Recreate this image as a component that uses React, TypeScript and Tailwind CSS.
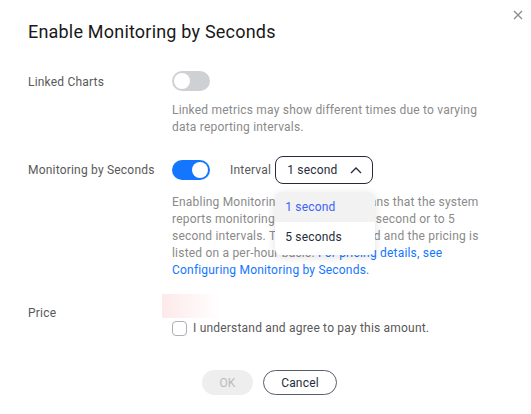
import { useState } from 'react';

function Toggle({ on }: { on: boolean }) {
  return (
    <div
      className={
        'w-[38px] h-[20px] rounded-full p-[2px] flex ' +
        (on ? 'bg-[#1476ff] justify-end' : 'bg-[#cfd0d3] justify-start')
      }
    >
      <div className="w-[16px] h-[16px] rounded-full bg-white" />
    </div>
  );
}

export default function App() {
  const [agree, setAgree] = useState(false);

  return (
    <div
      className="relative w-[531px] h-[414px] bg-white text-[12px] tracking-[0.2px]"
      style={{ fontFamily: 'Roboto, "Liberation Sans", sans-serif' }}
    >
      <button className="absolute top-[10px] right-[8px] w-[10px] h-[10px]">
        <svg width="10" height="10" viewBox="0 0 10 10">
          <path d="M1 1 L9 9 M9 1 L1 9" stroke="#8c8c8c" strokeWidth="1.3" />
        </svg>
      </button>

      <div className="pl-[28px] pt-[20px]">
        <h1 className="text-[18px] leading-[24px] text-[#191919]">Enable Monitoring by Seconds</h1>

        {/* Linked Charts */}
        <div className="mt-[26px] grid grid-cols-[144px_1fr] items-center">
          <div className="text-[#595959] leading-[17px] pt-[4px]">Linked Charts</div>
          <Toggle on={false} />
        </div>
        <div className="ml-[144px] mt-[11px] leading-[17px] text-[#8a8a8a]">
          Linked metrics may show different times due to varying
          <br />
          data reporting intervals.
        </div>

        {/* Monitoring by Seconds */}
        <div className="mt-[20px] grid grid-cols-[144px_1fr] items-center">
          <div className="text-[#595959] leading-[17px]">Monitoring by Seconds</div>
          <div className="flex items-center">
            <Toggle on={true} />
            <span className="ml-[20px] text-[#595959]">Interval</span>
            <div className="relative ml-[4px]">
              <div className="w-[98px] h-[28px] border border-[#252b3a] rounded-[8px] flex items-center justify-between pl-[11px] pr-[10px] text-[#252b3a]">
                <span>1 second</span>
                <svg width="12" height="8" viewBox="0 0 12 8">
                  <path d="M1 7 L6 2 L11 7" fill="none" stroke="#252b3a" strokeWidth="1.3" />
                </svg>
              </div>
              <div className="absolute left-0 top-[36px] w-[100px] bg-white rounded-[6px] shadow-[0_2px_10px_rgba(0,0,0,0.12)] overflow-hidden z-10">
                <div className="h-[30px] flex items-center pl-[10px] bg-[#f2f2f2] text-[#3b63f5]">1 second</div>
                <div className="h-[30px] flex items-center pl-[10px] text-[#252b3a] mb-[3px]">5 seconds</div>
              </div>
            </div>
          </div>
        </div>
        <div className="ml-[144px] mt-[10px] leading-[17px] text-[#8a8a8a]">
          Enabling Monitoring by Seconds means that the system
          <br />
          reports monitoring data at every one second or to 5
          <br />
          second intervals. This feature is billed and the pricing is
          <br />
          listed on a per-hour basis.{' '}
          <a className="text-[#1476ff]">
            For pricing details, see
            <br />
            Configuring Monitoring by Seconds.
          </a>
        </div>

        {/* Price */}
        <div className="mt-[15px] grid grid-cols-[134px_1fr] items-start">
          <div className="text-[#595959] leading-[17px] pt-[11px]">Price</div>
          <div className="w-[58px] h-[24px] bg-linear-to-r from-[#fde9e9] to-white" />
        </div>

        <label className="mt-[-2px] ml-[144px] flex items-center gap-[6px] cursor-pointer">
          <span
            onClick={() => setAgree(a => !a)}
            className={
              'w-[15px] h-[15px] rounded-[4px] border ' +
              (agree ? 'bg-[#1476ff] border-[#1476ff]' : 'border-[#adb0b8] bg-white')
            }
          />
          <span className="text-[#595959] leading-[17px]">I understand and agree to pay this amount.</span>
        </label>
      </div>

      <div className="mt-[33px] flex justify-center gap-[10px] pl-[8px]">
        <button className="w-[51px] h-[25px] rounded-full bg-[#eeeeee] text-[#bbbbbb]">OK</button>
        <button className="w-[74px] h-[25px] rounded-full border border-[#575d6c] text-[#252b3a]">Cancel</button>
      </div>
    </div>
  );
}
